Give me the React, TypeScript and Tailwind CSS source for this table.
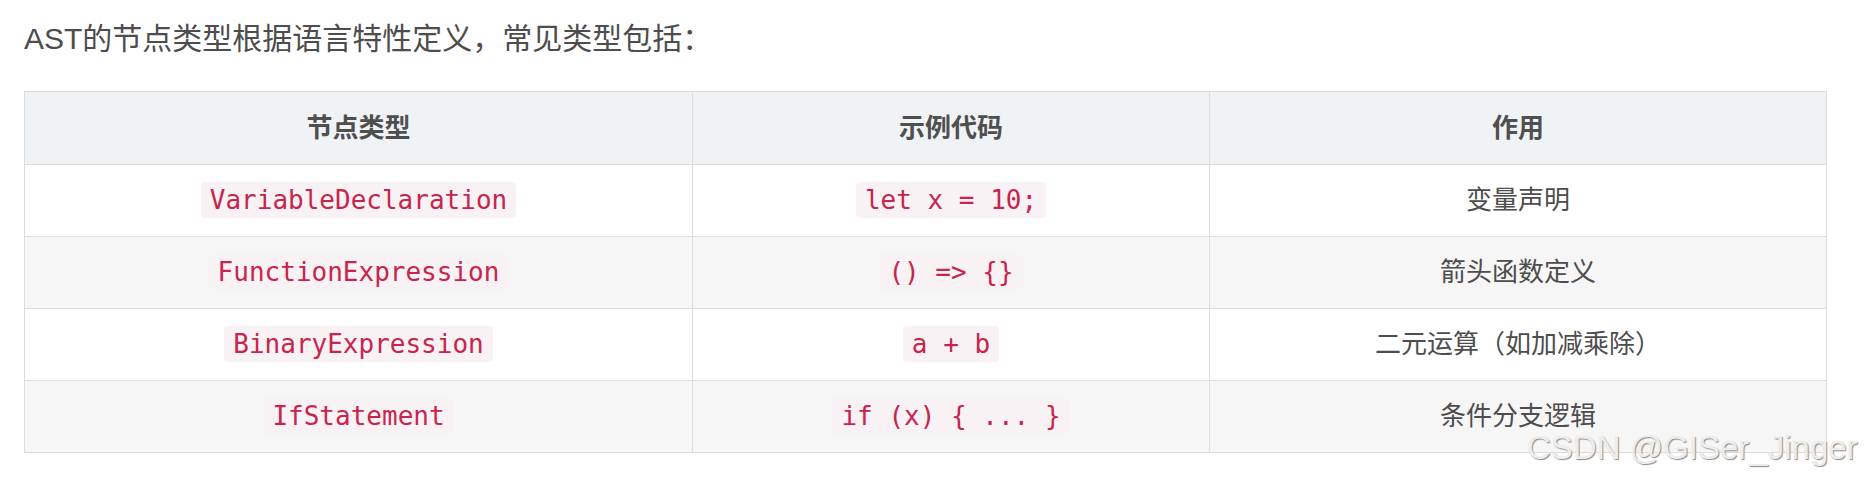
import React from 'react';

type Row = { node: string; code: string; desc: string };

const rows: Row[] = [
  { node: 'VariableDeclaration', code: 'let x = 10;', desc: '变量声明' },
  { node: 'FunctionExpression', code: '() => {}', desc: '箭头函数定义' },
  { node: 'BinaryExpression', code: 'a + b', desc: '二元运算（如加减乘除）' },
  { node: 'IfStatement', code: 'if (x) { ... }', desc: '条件分支逻辑' },
];

const Code: React.FC<{ children: React.ReactNode }> = ({ children }) => (
  <code className="rounded-[4px] bg-[#f9f2f4] px-[9px] py-[3px] font-['DejaVu_Sans_Mono',monospace] text-[26px] text-[#c7254e] whitespace-pre">
    {children}
  </code>
);

export default function App() {
  return (
    <div className="relative h-[479px] w-full overflow-hidden bg-white pl-[24px] pt-[16px] font-['Liberation_Sans','Noto_Sans_CJK_SC',sans-serif] text-[#4d4d4d]">
      <p className="mb-[30px] text-[30px] leading-[45px]">AST的节点类型根据语言特性定义，常见类型包括：</p>

      <table className="w-[1802px] table-fixed border-collapse text-[26px]">
        <colgroup>
          <col className="w-[668px]" />
          <col className="w-[517px]" />
          <col className="w-[617px]" />
        </colgroup>
        <thead>
          <tr className="h-[73px] bg-[#eff3f5]">
            <th className="border border-[#dddddd] font-bold text-[#4f4f4f]">节点类型</th>
            <th className="border border-[#dddddd] font-bold text-[#4f4f4f]">示例代码</th>
            <th className="border border-[#dddddd] font-bold text-[#4f4f4f]">作用</th>
          </tr>
        </thead>
        <tbody>
          {rows.map((r, i) => (
            <tr key={r.node} className={i % 2 === 1 ? 'h-[72px] bg-[#f6f6f6]' : 'h-[72px] bg-white'}>
              <td className="border border-[#dddddd] text-center">
                <Code>{r.node}</Code>
              </td>
              <td className="border border-[#dddddd] text-center">
                <Code>{r.code}</Code>
              </td>
              <td className="border border-[#dddddd] text-center">{r.desc}</td>
            </tr>
          ))}
        </tbody>
      </table>

      {/* watermark */}
      <div className="absolute left-[1527px] top-[431px] whitespace-nowrap text-[33px] leading-none text-[#ededed] [text-shadow:1px_1px_1px_#8a8a8a]">
        CSDN @GISer_Jinger
      </div>
    </div>
  );
}
